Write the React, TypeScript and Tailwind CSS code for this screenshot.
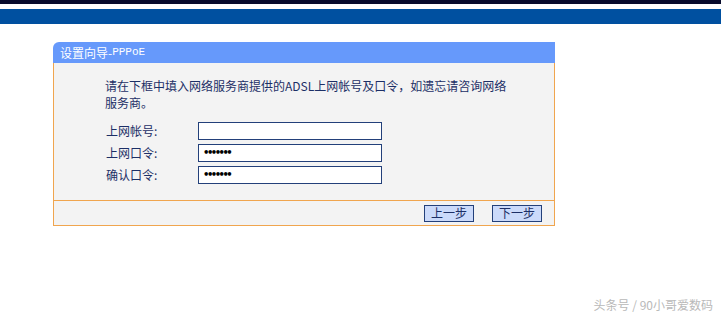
const cjk = { fontFamily: '"Noto Sans CJK SC", "Liberation Sans", sans-serif' }

function Field({ label, value }: { label: string; value?: string }) {
  return (
    <div className="flex h-[18px] items-center">
      <span className="w-[92px] text-[12px] leading-none text-[#1c2f66]">{label}</span>
      <div className="flex h-[18px] w-[184px] items-center border border-[#23407a] bg-white pl-[4px]">
        {value && (
          <span className="text-[10px] font-bold leading-none tracking-[-2.5px] text-black" style={{ fontFamily: '"DejaVu Sans", sans-serif' }}>
            {value}
          </span>
        )}
      </div>
    </div>
  )
}

function StepButton({ label }: { label: string }) {
  return (
    <button className="flex h-[17px] w-[50px] items-center justify-center border border-[#23407a] bg-[#cbdafa] text-[12px] leading-none text-[#1c2f66]">
      {label}
    </button>
  )
}

export default function App() {
  return (
    <div className="relative h-[318px] w-[721px] overflow-hidden bg-white" style={cjk}>
      <div className="h-[4px] bg-[#070b2c]" />
      <div className="h-[5px] bg-white" />
      <div className="h-[15px] bg-[#0050a0]" />

      <div className="ml-[53px] mt-[18px] w-[502px]">
        <div className="flex h-[21px] items-center rounded-tl-[6px] bg-[#6699fb] pl-[7px] text-[12px] leading-none text-white">
          <span>设置向导-</span>
          <span className="text-[11px]" style={{ fontFamily: '"Liberation Mono", monospace' }}>PPPoE</span>
        </div>
        <div className="border-x border-b border-[#f0a54e] bg-[#f3f3f3]">
          <div className="h-[137px] pl-[51px] pt-[14px]">
            <p className="w-[420px] text-[12px] leading-[17px] text-[#1c2f66]">
              请在下框中填入网络服务商提供的ADSL上网帐号及口令，如遗忘请咨询网络
              <br />
              服务商。
            </p>
            <div className="ml-[1px] mt-[11px] flex flex-col gap-[4px]">
              <Field label="上网帐号:" />
              <Field label="上网口令:" value="•••••••" />
              <Field label="确认口令:" value="•••••••" />
            </div>
          </div>
          <div className="flex h-[25px] items-center justify-end gap-[18px] border-t border-[#f0a54e] pr-[12px]">
            <StepButton label="上一步" />
            <StepButton label="下一步" />
          </div>
        </div>
      </div>

      <div className="absolute bottom-[4px] right-[8px] text-[12px] text-[#b9b9b9]">头条号 / 90小哥爱数码</div>
    </div>
  )
}
